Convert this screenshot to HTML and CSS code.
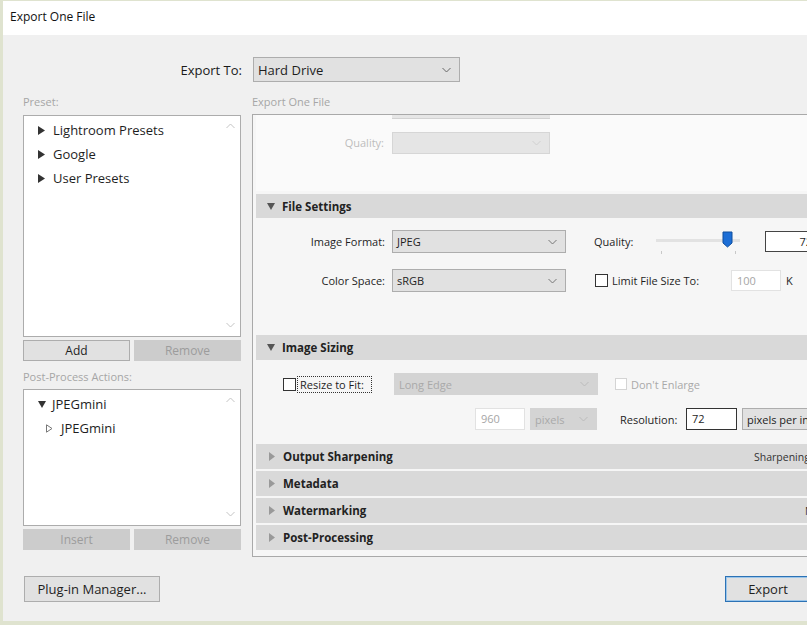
FILE: index.html
```html
<!DOCTYPE html>
<html lang="en">
<head>
    <meta charset="UTF-8">
    <title>Export One File</title>
    <link rel="stylesheet" href="styles.css">
</head>
<body>
<div class="window">
    <div class="titlebar">Export One File</div>

    <div class="main">
        <div class="export-to">
            <span class="export-label">Export To:</span>
            <div class="select select-export">
                <span>Hard Drive</span>
                <svg class="chev" width="9" height="6" viewBox="0 0 9 6"><path d="M0.5 1l4 4 4-4" fill="none" stroke="#666"/></svg>
            </div>
        </div>

        <div class="columns">
            <div class="left-col">
                <div class="caption">Preset:</div>
                <div class="listbox preset-list">
                    <ul class="tree">
                        <li><svg class="tri" width="7" height="9" viewBox="0 0 7 9"><path d="M0 0L7 4.5L0 9Z" fill="#333"/></svg>Lightroom Presets</li>
                        <li><svg class="tri" width="7" height="9" viewBox="0 0 7 9"><path d="M0 0L7 4.5L0 9Z" fill="#333"/></svg>Google</li>
                        <li><svg class="tri" width="7" height="9" viewBox="0 0 7 9"><path d="M0 0L7 4.5L0 9Z" fill="#333"/></svg>User Presets</li>
                    </ul>
                    <div class="scroll">
                        <svg width="9" height="6" viewBox="0 0 9 6"><path d="M0.5 5l4-4 4 4" fill="none" stroke="#c4c4c4"/></svg>
                        <svg width="9" height="6" viewBox="0 0 9 6"><path d="M0.5 1l4 4 4-4" fill="none" stroke="#c4c4c4"/></svg>
                    </div>
                </div>
                <div class="btn-pair">
                    <button class="btn">Add</button>
                    <button class="btn" disabled>Remove</button>
                </div>

                <div class="caption caption-post">Post-Process Actions:</div>
                <div class="listbox post-list">
                    <ul class="tree">
                        <li><svg class="tri tri-down" width="8" height="7" viewBox="0 0 8 7"><path d="M0 0H8L4 7Z" fill="#333"/></svg>JPEGmini</li>
                        <li class="child"><svg class="tri" width="7" height="9" viewBox="0 0 7 9"><path d="M0.5 0.8L6 4.5L0.5 8.2Z" fill="none" stroke="#777"/></svg>JPEGmini</li>
                    </ul>
                    <div class="scroll">
                        <svg width="9" height="6" viewBox="0 0 9 6"><path d="M0.5 5l4-4 4 4" fill="none" stroke="#c4c4c4"/></svg>
                        <svg width="9" height="6" viewBox="0 0 9 6"><path d="M0.5 1l4 4 4-4" fill="none" stroke="#c4c4c4"/></svg>
                    </div>
                </div>
                <div class="btn-pair">
                    <button class="btn" disabled>Insert</button>
                    <button class="btn" disabled>Remove</button>
                </div>
            </div>

            <div class="right-col">
                <div class="caption">Export One File</div>
                <div class="panel">
                    <div class="panel-top">
                        <div class="cut-box"></div>
                        <div class="row row-faded">
                            <span class="label">Quality:</span>
                            <div class="select select-faded">
                                <span></span>
                                <svg class="chev" width="9" height="6" viewBox="0 0 9 6"><path d="M0.5 1l4 4 4-4" fill="none" stroke="#d0d0d0"/></svg>
                            </div>
                        </div>
                    </div>

                    <div class="section-head">
                        <svg class="head-tri" width="8" height="7" viewBox="0 0 8 7"><path d="M0 0H8L4 7Z" fill="#555"/></svg>
                        File Settings
                    </div>
                    <div class="section-body file-settings">
                        <div class="row">
                            <span class="label">Image Format:</span>
                            <div class="select select-field">
                                <span>JPEG</span>
                                <svg class="chev" width="9" height="6" viewBox="0 0 9 6"><path d="M0.5 1l4 4 4-4" fill="none" stroke="#777"/></svg>
                            </div>
                            <span class="quality-label">Quality:</span>
                            <div class="slider">
                                <div class="track"></div>
                                <svg class="thumb" width="11" height="17" viewBox="0 0 11 17"><path d="M1 1H10V12L5.5 16L1 12Z" fill="#1c6ed6" stroke="#0f4f9e"/></svg>
                                <span class="tick tick-left"></span>
                                <span class="tick tick-right"></span>
                            </div>
                            <div class="input input-quality">72</div>
                        </div>
                        <div class="row row-second">
                            <span class="label">Color Space:</span>
                            <div class="select select-field">
                                <span>sRGB</span>
                                <svg class="chev" width="9" height="6" viewBox="0 0 9 6"><path d="M0.5 1l4 4 4-4" fill="none" stroke="#777"/></svg>
                            </div>
                            <span class="checkbox cb-limit"></span>
                            <span class="limit-label">Limit File Size To:</span>
                            <div class="input input-disabled input-limit">100</div>
                            <span class="unit">K</span>
                        </div>
                    </div>

                    <div class="section-head section-gap sizing-head">
                        <svg class="head-tri" width="8" height="7" viewBox="0 0 8 7"><path d="M0 0H8L4 7Z" fill="#555"/></svg>
                        Image Sizing
                    </div>
                    <div class="section-body image-sizing">
                        <div class="row row-resize">
                            <span class="checkbox cb-resize"></span>
                            <span class="focus-label">Resize to Fit:</span>
                            <div class="select select-disabled select-edge">
                                <span>Long Edge</span>
                                <svg class="chev" width="9" height="6" viewBox="0 0 9 6"><path d="M0.5 1l4 4 4-4" fill="none" stroke="#bbb"/></svg>
                            </div>
                            <span class="checkbox checkbox-disabled cb-enlarge"></span>
                            <span class="muted">Don't Enlarge</span>
                        </div>
                        <div class="row row-size">
                            <div class="input input-disabled input-px">960</div>
                            <div class="select select-disabled select-px">
                                <span>pixels</span>
                                <svg class="chev" width="9" height="6" viewBox="0 0 9 6"><path d="M0.5 1l4 4 4-4" fill="none" stroke="#bbb"/></svg>
                            </div>
                            <span class="res-label">Resolution:</span>
                            <div class="input input-res">72</div>
                            <div class="select select-field select-ppi">
                                <span>pixels per inch</span>
                            </div>
                        </div>
                    </div>

                    <div class="section-head section-gap collapsed">
                        <svg class="head-tri" width="6" height="9" viewBox="0 0 6 9"><path d="M0 0L6 4.5L0 9Z" fill="#999"/></svg>
                        Output Sharpening
                        <span class="summary summary-sharp">Sharpening Off</span>
                    </div>
                    <div class="section-head section-gap collapsed">
                        <svg class="head-tri" width="6" height="9" viewBox="0 0 6 9"><path d="M0 0L6 4.5L0 9Z" fill="#999"/></svg>
                        Metadata
                    </div>
                    <div class="section-head section-gap collapsed">
                        <svg class="head-tri" width="6" height="9" viewBox="0 0 6 9"><path d="M0 0L6 4.5L0 9Z" fill="#999"/></svg>
                        Watermarking
                        <span class="summary summary-water">None</span>
                    </div>
                    <div class="section-head section-gap collapsed">
                        <svg class="head-tri" width="6" height="9" viewBox="0 0 6 9"><path d="M0 0L6 4.5L0 9Z" fill="#999"/></svg>
                        Post-Processing
                    </div>
                </div>
            </div>
        </div>

        <div class="footer">
            <button class="btn btn-plugin">Plug-in Manager...</button>
            <button class="btn btn-export">Export</button>
        </div>
    </div>
</div>
</body>
</html>
```

FILE: styles.css
```css
body {
    margin: 0;
    background: #f0f0f0;
    font-family: "Open Sans", "Noto Sans", sans-serif;
    font-size: 12px;
    color: #1e1e1e;
    overflow: hidden;
}

.window {
    width: 807px;
    height: 625px;
    box-sizing: border-box;
    border-left: 3px solid #dfe3cf;
    border-top: 1px solid #dfe3cf;
    border-bottom: 4px solid #dfe3cf;
    background: #f0f0f0;
    display: flex;
    flex-direction: column;
    overflow: hidden;
}

.titlebar {
    height: 34px;
    line-height: 32px;
    background: #fff;
    padding-left: 7px;
    font-size: 12px;
    color: #111;
    flex: none;
}

.main {
    padding: 22px 0 0 20px;
}

/* export to row */

.export-to {
    display: flex;
    align-items: center;
    gap: 11px;
}

.export-label {
    width: 219px;
    text-align: right;
    font-size: 13px;
    color: #1a1a1a;
}

.select {
    display: flex;
    align-items: center;
    justify-content: space-between;
    box-sizing: border-box;
    border: 1px solid #adadad;
    background: #e1e1e1;
    padding: 0 8px 0 4px;
    white-space: nowrap;
    overflow: hidden;
}

.select-export {
    width: 207px;
    height: 25px;
    font-size: 13px;
}

/* columns */

.columns {
    display: flex;
    align-items: flex-start;
    gap: 11px;
    margin-top: 14px;
}

.left-col {
    width: 218px;
    flex: none;
}

.right-col {
    width: 600px;
    flex: none;
}

.caption {
    height: 18px;
    line-height: 12px;
    font-size: 11px;
    color: #a6a6a6;
}

.left-col > .caption:first-child {
    height: 19px;
}

.caption-post {
    margin-top: 10px;
}

.listbox {
    display: flex;
    box-sizing: border-box;
    background: #fff;
    border: 1px solid #acacac;
}

.preset-list {
    height: 222px;
}

.post-list {
    height: 137px;
}

.tree {
    flex: 1;
    list-style: none;
    margin: 0;
    padding: 2px 0 0 14px;
    font-size: 13px;
}

.tree li {
    display: flex;
    align-items: center;
    height: 24px;
}

.tri {
    margin-right: 8px;
}

.tri-down {
    margin-right: 6px;
}

.tree .child {
    padding-left: 8px;
}

.scroll {
    width: 20px;
    display: flex;
    flex-direction: column;
    justify-content: space-between;
    align-items: center;
    padding: 7px 0 8px;
}

.btn-pair {
    display: flex;
    gap: 4px;
    margin-top: 3px;
}

.btn {
    flex: 1;
    height: 21px;
    padding: 0;
    border: 1px solid #adadad;
    background: #e1e1e1;
    font-family: inherit;
    font-size: 12px;
    color: #1e1e1e;
}

.btn:disabled {
    background: #cccccc;
    border-color: #cccccc;
    color: #9c9c9c;
}

/* right panel */

.panel {
    height: 443px;
    box-sizing: border-box;
    border: 1px solid #a9a9a9;
    border-right: none;
    background: #f6f6f6;
    padding-left: 3px;
    overflow: hidden;
}

.panel-top {
    height: 76px;
    margin-bottom: 3px;
    background: #fafafa;
}

.cut-box {
    width: 158px;
    height: 3px;
    margin-left: 136px;
    background: #e6e6e6;
    border-bottom: 1px solid #d2d2d2;
}

.row {
    display: flex;
    align-items: center;
    height: 23px;
}

.row-faded {
    margin-top: 12px;
}

.label {
    width: 129px;
    flex: none;
    text-align: right;
    margin-right: 7px;
    font-size: 11px;
}

.row-faded .label {
    width: 128px;
    margin-right: 8px;
    color: #bdbdbd;
}

.select-faded {
    width: 158px;
    height: 22px;
    background: #e5e5e5;
    border-color: #d6d6d6;
}

.section-head {
    display: flex;
    align-items: center;
    height: 24px;
    padding-left: 11px;
    background: #d9d9d9;
    font-size: 11.5px;
    font-weight: 700;
    color: #222;
    white-space: nowrap;
}

.sizing-head {
    height: 25px;
}

.head-tri {
    margin-right: 7px;
}

.collapsed {
    height: 25px;
    padding-left: 13px;
}

.collapsed .head-tri {
    margin-right: 8px;
}

.section-gap {
    margin-top: 2px;
}

.section-body {
    background: #f6f6f6;
}

.file-settings {
    height: 115px;
    padding-top: 12px;
    box-sizing: border-box;
}

.select-field {
    width: 174px;
    height: 23px;
    font-size: 11px;
}

.quality-label {
    margin-left: 28px;
    width: 62px;
    font-size: 11px;
}

.slider {
    position: relative;
    width: 84px;
    height: 23px;
}

.track {
    margin-top: 9px;
    height: 3px;
    background: #e2e2e2;
}

.thumb {
    position: absolute;
    left: 66px;
    top: 1px;
}

.tick {
    position: absolute;
    top: 21px;
    width: 1px;
    height: 3px;
    background: #c8c8c8;
}

.tick-left {
    left: 5px;
}

.tick-right {
    left: 79px;
}

.input {
    box-sizing: border-box;
    height: 21px;
    border: 1px solid #7a7a7a;
    background: #fff;
    font-size: 11px;
    line-height: 19px;
    padding: 0 5px;
}

.input-quality {
    margin-left: 25px;
    width: 60px;
    text-align: right;
    padding-right: 12px;
    border-color: #444;
}

.row-second {
    margin-top: 16px;
}

.checkbox {
    display: inline-block;
    box-sizing: border-box;
    width: 13px;
    height: 13px;
    border: 1px solid #333;
    background: #fff;
    flex: none;
}

.checkbox-disabled {
    border-color: #d4d4d4;
}

.cb-limit {
    margin-left: 29px;
}

.limit-label {
    margin-left: 4px;
    width: 119px;
    font-size: 11px;
}

.input-disabled {
    border-color: #e2e2e2;
    color: #a6a6a6;
}

.input-limit {
    width: 50px;
}

.unit {
    margin-left: 5px;
    font-size: 11px;
}

.image-sizing {
    height: 82px;
    padding: 13px 0 0 27px;
    box-sizing: border-box;
}

.row-resize {
    height: 22px;
}

.focus-label {
    width: 69px;
    margin-left: 1px;
    padding: 0 2px;
    border: 1px dotted #333;
    font-size: 11px;
    line-height: 15px;
    white-space: nowrap;
}

.select-disabled {
    background: #d4d4d4;
    border-color: #d4d4d4;
    color: #a9a9a9;
    font-size: 11px;
}

.select-edge {
    width: 204px;
    height: 22px;
    margin-left: 22px;
}

.cb-enlarge {
    margin-left: 17px;
    width: 12px;
    height: 12px;
}

.muted {
    margin-left: 4px;
    font-size: 11px;
    color: #a9a9a9;
}

.row-size {
    margin-top: 13px;
    height: 22px;
    padding-left: 192px;
}

.input-px {
    width: 50px;
    height: 22px;
}

.select-px {
    width: 67px;
    height: 22px;
    margin-left: 5px;
}

.res-label {
    margin-left: 23px;
    width: 66px;
    font-size: 11px;
}

.input-res {
    width: 51px;
    height: 22px;
    border-color: #333;
}

.select-ppi {
    width: 90px;
    height: 22px;
    margin-left: 5px;
}

.summary {
    margin-left: auto;
    font-weight: 400;
    font-size: 10.5px;
    color: #333;
}

.summary-sharp {
    width: 98px;
}

.summary-water {
    width: 47px;
}

/* footer */

.footer {
    display: flex;
    width: 788px;
    margin-top: 19px;
}

.btn-plugin {
    flex: none;
    width: 136px;
    height: 26px;
    margin-left: 1px;
    font-size: 13px;
}

.btn-export {
    flex: none;
    width: 86px;
    height: 26px;
    margin-left: auto;
    font-size: 13px;
    border-color: #2c72b5;
    box-shadow: inset 0 0 0 1px #9cc6ea;
}
```
